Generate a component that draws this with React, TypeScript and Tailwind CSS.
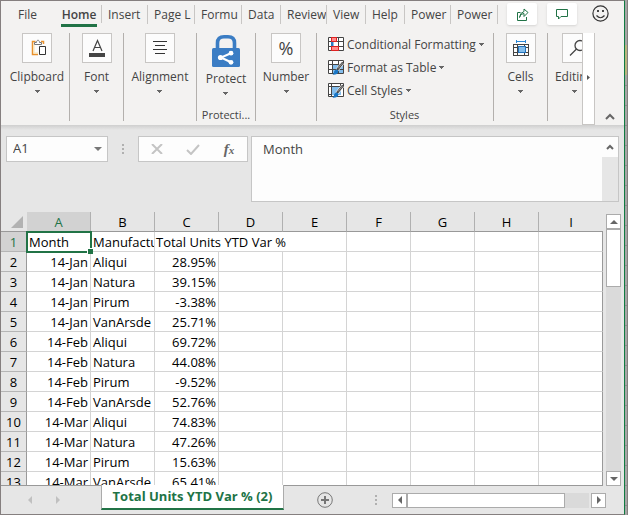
import React from "react";

const rows: [string, string, string][] = [
  ["14-Jan", "Aliqui", "28.95%"],
  ["14-Jan", "Natura", "39.15%"],
  ["14-Jan", "Pirum", "-3.38%"],
  ["14-Jan", "VanArsde", "25.71%"],
  ["14-Feb", "Aliqui", "69.72%"],
  ["14-Feb", "Natura", "44.08%"],
  ["14-Feb", "Pirum", "-9.52%"],
  ["14-Feb", "VanArsde", "52.76%"],
  ["14-Mar", "Aliqui", "74.83%"],
  ["14-Mar", "Natura", "47.26%"],
  ["14-Mar", "Pirum", "15.63%"],
  ["14-Mar", "VanArsde", "65.41%"],
];

const tabs = [
  { label: "Insert", width: "w-[46px]" },
  { label: "Page L", width: "w-[47px]" },
  { label: "Formu", width: "w-[47px]" },
  { label: "Data", width: "w-[39px]" },
  { label: "Review", width: "w-[46px]" },
  { label: "View", width: "w-[39px]" },
  { label: "Help", width: "w-[39px]" },
  { label: "Power", width: "w-[46px]" },
  { label: "Power", width: "w-[47px]" },
];

const columns = ["A", "B", "C", "D", "E", "F", "G", "H", "I"];

function Down({ className = "" }: { className?: string }) {
  return (
    <svg aria-hidden="true" width="5" height="3" viewBox="0 0 5 3" shapeRendering="crispEdges" className={className}>
      <path d="M0 0h5v1H0zM1 1h3v1H1zM2 2h1v1H2z" fill="#666" />
    </svg>
  );
}

function Arrow({ dir, fill = "#666" }: { dir: "up" | "down" | "left" | "right"; fill?: string }) {
  const paths = {
    up: "M0 6L4 2l4 4z",
    down: "M0 2h8L4 6z",
    left: "M6 0v8L2 4z",
    right: "M2 0v8l4-4z",
  };
  return (
    <svg aria-hidden="true" width="8" height="8" viewBox="0 0 8 8">
      <path d={paths[dir]} fill={fill} />
    </svg>
  );
}

function Group({ label, width, children }: { label: string; width: string; children: React.ReactNode }) {
  return (
    <div className={`flex shrink-0 justify-center border-r border-[#b3b0ad] ${width}`}>
      <button className="flex flex-col items-center">
        <span className="flex size-[30px] items-center justify-center border border-[#c8c6c4] bg-[#fcfcfc]">{children}</span>
        <span className="mt-[5px] leading-[18px]">{label}</span>
        <Down className="mt-1" />
      </button>
    </div>
  );
}

function ClipboardIcon() {
  return (
    <svg width="16" height="18" viewBox="0 0 16 18" fill="none" className="ml-[3px]">
      <path d="M4.500 2.500H1.500V15.500H7M10 2.500h2.500V5" stroke="#e8912d" strokeWidth="1.500" />
      <path d="M3 5v9h4" stroke="#fbe3a9" strokeWidth="1" />
      <path d="M3.500 5.500V3.500h2C5.500 .5 8.500 .5 8.500 3.500h2v2z" fill="#fff" stroke="#777" />
      <path d="M8.500 7.500h6v8h-6z" fill="#fff" stroke="#333" />
    </svg>
  );
}

function AlignIcon() {
  return (
    <svg width="16" height="16" viewBox="0 0 16 16" shapeRendering="crispEdges">
      <path d="M1 1h14v1H1zM3 5h10v1H3zM1 9h14v1H1zM3 13h10v1H3z" fill="#333" />
    </svg>
  );
}

function LockIcon() {
  return (
    <svg width="28" height="32" viewBox="0 0 28 32">
      <path d="M5.500 14V8Q5.500 1.800 12 1.800h4Q22.500 1.800 22.500 8v6" fill="none" stroke="#3b7dc4" strokeWidth="3.600" />
      <rect y="13" width="28" height="19" rx="1.500" fill="#3b7dc4" />
      <path d="M19.500 18L9 22.500l10.500 5" fill="none" stroke="#fff" strokeWidth="2" />
      <circle cx="19" cy="18.200" r="2.400" fill="#fff" />
      <circle cx="8.500" cy="22.500" r="2.600" fill="#fff" />
      <circle cx="19" cy="27.300" r="2.400" fill="#fff" />
    </svg>
  );
}

function StyleIcon({ kind }: { kind: "conditional" | "table" | "cell" }) {
  return (
    <svg width="16" height="16" viewBox="0 0 16 16" fill="none">
      <path d="M.5.5h15v13H.5z" fill="#fff" />
      {kind === "table" && <path d="M5 5h10v8H5z" fill="#83bdec" />}
      {kind === "cell" && <path d="M3 3h10v9H3z" fill="#83bdec" />}
      <path
        d={kind === "cell" ? "M.5.5h15v13H.5zM3.500 0v14M0 3.500h16M12.500 0v3M0 11.500h4" : "M.5.5h15v13H.5zM0 4.500h16M0 9.500h16M4.500 0v14M10.500 0v14"}
        stroke="#444"
      />
      {kind === "conditional" && (
        <>
          <path d="M3.500 .5h5v4h-5zM3.500 9.500h7v4h-7z" fill="#ff8b8b" stroke="#e02020" />
          <path d="M3 5h2.500v4H3z" fill="#2b7bc3" />
        </>
      )}
      {kind !== "conditional" && (
        <>
          <path d="M14.800 2.800L9 10" stroke="#fff" strokeWidth="3.500" />
          <path d="M15 2.500L9 10" stroke="#444" strokeWidth="2.200" />
          <path d="M14.500 3L10 8.500" stroke="#bbb" strokeWidth=".7" />
          <path d="M8.500 9.500q2 .5 2 2-.7 3.500-6 3.200 1.700-1.200 1.500-3 .6-2 2.500-2.200z" fill="#1976c5" />
        </>
      )}
    </svg>
  );
}

function CellsIcon() {
  return (
    <svg width="16" height="16" viewBox="0 0 16 16" fill="none" shapeRendering="crispEdges">
      <path d="M3.500 0v3M12.500 0v3M4 1.500h9" stroke="#2b88d8" />
      <path d="M.5 4.500h15v11H.5zM0 7.500h16M0 12.500h16M4.500 4v12M11.500 4v12" stroke="#444" />
      <path d="M5 6h7v6H5z" fill="#83bdec" stroke="#2372ba" />
    </svg>
  );
}

function StyleButton({ kind, label }: { kind: "conditional" | "table" | "cell"; label: string }) {
  return (
    <button className="flex h-[23px] items-center whitespace-nowrap">
      <StyleIcon kind={kind} />
      <span className="ml-[3px] mr-[3px]">{label}</span>
      <Down />
    </button>
  );
}

function Ribbon() {
  return (
    <div className="flex h-[92px] overflow-hidden pl-1 text-[12px] text-[#444]">
      <div className="flex h-[88px]">
        <Group label="Clipboard" width="w-[65px]"><ClipboardIcon /></Group>
        <Group label="Font" width="w-[54px]">
          <svg width="16" height="18" viewBox="0 0 16 18">
            <path d="M4 12L8.500 1.500 13 12M5.500 8.500h6" fill="none" stroke="#444" strokeWidth="1.200" />
            <path d="M0 14h16v4H0z" fill="#444" />
          </svg>
        </Group>
        <Group label="Alignment" width="w-[73px]"><AlignIcon /></Group>
        <div className="flex w-[59px] shrink-0 flex-col items-center border-r border-[#b3b0ad]">
          <button className="flex flex-col items-center pt-[2px]">
            <LockIcon />
            <span className="mt-[3px] leading-[18px]">Protect</span>
            <Down className="mt-1" />
          </button>
          <span className="mt-auto text-[11px] leading-[12px]">Protecti...</span>
        </div>
        <Group label="Number" width="w-[61px]"><span className="text-[18px]">%</span></Group>
        <div className="flex w-[177px] shrink-0 flex-col border-r border-[#b3b0ad] pl-[11px]">
          <StyleButton kind="conditional" label="Conditional Formatting" />
          <StyleButton kind="table" label="Format as Table" />
          <StyleButton kind="cell" label="Cell Styles" />
          <span className="mt-auto pr-[12px] text-center text-[11px] leading-[12px]">Styles</span>
        </div>
        <Group label="Cells" width="w-[54px]"><CellsIcon /></Group>
        <div className="w-[34px] shrink-0 overflow-hidden pl-[8px]">
          <button className="flex w-[36px] flex-col items-center">
            <span className="ml-[6px] flex size-[30px] items-center justify-center border border-[#c8c6c4] bg-[#fcfcfc]">
              <svg width="18" height="18" viewBox="0 0 18 18" fill="none" stroke="#444" strokeWidth="1.300">
                <circle cx="12" cy="6.500" r="5" />
                <path d="M8.500 10L2 16.500" />
              </svg>
            </span>
            <span className="mt-[5px] leading-[18px]">Editing</span>
            <Down className="mt-1" />
          </button>
        </div>
      </div>
      <button aria-label="More commands" className="-mt-1 flex h-24 w-[13px] shrink-0 items-center justify-center border border-[#c8c6c4] bg-white">
        <svg width="3" height="5" viewBox="0 0 3 5"><path d="M0 0v5l3-2.500z" fill="#555" /></svg>
      </button>
      <button aria-label="Collapse ribbon" className="ml-auto mr-[9px] mt-auto mb-[5px]">
        <svg width="10" height="7" viewBox="0 0 10 7"><path d="M1 6l4-4 4 4" fill="none" stroke="#666" strokeWidth="2" /></svg>
      </button>
    </div>
  );
}

function Dots() {
  return (
    <svg aria-hidden="true" width="2" height="10" viewBox="0 0 2 10" shapeRendering="crispEdges">
      <path d="M0 0h2v2H0zM0 4h2v2H0zM0 8h2v2H0z" fill="#b0b0b0" />
    </svg>
  );
}

function FormulaBar() {
  return (
    <div className="flex items-start pl-[5px] pr-[5px] pt-[6px] text-[13px] text-[#444]">
      <div className="flex h-[26px] w-[102px] items-center justify-between border border-[#c6c6c6] bg-[#fdfdfd] pl-1.5 pr-[5px]">
        <input aria-label="Name box" defaultValue="A1" className="w-16 min-w-0 bg-transparent outline-none" />
        <button aria-label="Open name list"><Arrow dir="down" fill="#777" /></button>
      </div>
      <div className="flex h-[26px] w-[30px] items-center justify-center"><Dots /></div>
      <div className="flex h-[26px] w-[110px] items-center border border-[#c6c6c6] bg-[#fdfdfd]">
        <button aria-label="Cancel" className="flex flex-1 justify-center">
          <svg width="12" height="10" viewBox="0 0 12 10"><path d="M1 0l10 10M11 0L1 10" stroke="#c4c4c4" strokeWidth="2" /></svg>
        </button>
        <button aria-label="Enter" className="flex flex-1 justify-center">
          <svg width="14" height="11" viewBox="0 0 14 11"><path d="M1 6l4 4 8-9" fill="none" stroke="#c4c4c4" strokeWidth="2" /></svg>
        </button>
        <button aria-label="Insert function" className="flex flex-1 items-baseline justify-center font-['Liberation_Serif',serif] text-[15px] font-bold italic leading-5 text-[#666]">
          f<span className="text-[11px]">x</span>
        </button>
      </div>
      <div className="ml-[3px] flex h-[66px] flex-1 border border-[#c6c6c6] bg-[#fdfdfd]">
        <textarea aria-label="Formula" defaultValue="Month" className="min-w-0 flex-1 resize-none bg-transparent pl-[11px] pt-[2px] leading-5 outline-none" />
        <div className="flex w-4 flex-col bg-[#e6e6e6]">
          <button aria-label="Collapse formula bar" className="flex h-5 items-center justify-center bg-[#fdfdfd]">
            <svg width="8" height="6" viewBox="0 0 8 6"><path d="M1 5l3-3 3 3" fill="none" stroke="#666" strokeWidth="2" /></svg>
          </button>
        </div>
      </div>
    </div>
  );
}

const cell = "border-b border-r border-[#d4d4d4] p-0 pt-px whitespace-nowrap overflow-hidden";

function Sheet() {
  return (
    <table className="w-full table-fixed border-separate border-spacing-0 bg-white text-[13px] leading-[18px] text-black">
      <colgroup>
        <col className="w-[26px]" />
        {columns.map((c) => <col key={c} />)}
      </colgroup>
      <thead>
        <tr className="h-5 bg-[#e6e6e6]">
          <th aria-label="Select all" className="border-b border-[#999] p-0">
            <svg className="ml-[10px]" width="12" height="12" viewBox="0 0 12 12"><path d="M12 0v12H0z" fill="#b2b2b2" /></svg>
          </th>
          {columns.map((c) => (
            <th
              key={c}
              scope="col"
              className={
                c === "A"
                  ? "border-b border-r border-b-[#217346] border-r-[#b0b0b0] bg-[#d2d2d2] p-0 pt-px font-normal text-[#217346]"
                  : c === "I"
                    ? "border-b border-[#999] p-0 pt-px font-normal"
                    : "border-b border-r border-b-[#999] border-r-[#b0b0b0] p-0 pt-px font-normal"
              }
            >
              {c}
            </th>
          ))}
        </tr>
      </thead>
      <tbody>
        <tr className="h-5">
          <th scope="row" className="border-b border-r border-b-[#b5b5b5] border-r-[#217346] bg-[#d2d2d2] p-0 pt-px font-normal text-[#217346]">1</th>
          <td className="relative border-b border-r border-[#217346] p-0 pl-[2px] pt-px outline-2 -outline-offset-1 outline-[#217346]">
            Month
            <span className="absolute -bottom-[3px] -right-[3px] size-[6px] border-l border-t border-white bg-[#217346]" />
          </td>
          <td className={`${cell} pl-[2px]`}>Manufactu</td>
          <td colSpan={3} className={`${cell} pl-px`}>Total Units YTD Var %</td>
          {["F", "G", "H"].map((c) => <td key={c} className={cell} />)}
          <td className="border-b border-r border-b-[#d4d4d4] border-r-[#999] p-0" />
        </tr>
        {rows.map(([month, maker, value], i) => (
          <tr key={i} className="h-5">
            <th scope="row" className="border-b border-r border-b-[#b5b5b5] border-r-[#999] bg-[#e6e6e6] p-0 pt-px font-normal">{i + 2}</th>
            <td className={`${cell} pr-[2px] text-right`}>{month}</td>
            <td className={`${cell} pl-[2px]`}>{maker}</td>
            <td className={`${cell} pr-[2px] text-right`}>{value}</td>
            {["D", "E", "F", "G", "H"].map((c) => <td key={c} className={cell} />)}
            <td className="border-b border-r border-b-[#d4d4d4] border-r-[#999] p-0" />
          </tr>
        ))}
      </tbody>
    </table>
  );
}

const scrollButton = "flex size-[15px] shrink-0 items-center justify-center border border-[#ababab] bg-white";

export default function App() {
  return (
    <div className="flex h-screen w-full overflow-hidden bg-[#e6e6e6] font-['Open_Sans','Noto_Sans',sans-serif]">
      <main className="flex min-w-0 flex-1 flex-col border border-[#857f7f] border-r-[#107c41]">
        <header className="bg-[#f3f2f1]">
          <nav className="flex h-8 items-start pt-1 text-[12px] leading-[19px] text-[#444]">
            <button className="w-[53px]">File</button>
            <button className="ml-[7px] w-9 border-b-[3px] border-[#217346] font-semibold">Home</button>
            <span className="ml-[4px] h-[18px] w-px bg-[#c8c6c4]" />
            {tabs.map((t, i) => (
              <button key={i} className={`h-[19px] shrink-0 overflow-hidden whitespace-nowrap border-r border-[#c8c6c4] pl-[6px] pr-[2px] text-left leading-[19px] ${t.width}`}>
                {t.label}
              </button>
            ))}
            <button aria-label="Share" className="-mt-[2px] ml-[9px] flex h-[22px] w-[30px] items-center justify-center rounded-[2px] bg-white shadow-sm">
              <svg width="13" height="13" viewBox="0 0 13 13" fill="none" stroke="#217346">
                <path d="M4.500 4.500h-3v8h9V9M3.500 9.500Q4 5.500 8 5.500v3L12 4.500 8 1v2.500Q4 4.500 3.500 9.500z" />
              </svg>
            </button>
            <button aria-label="Comments" className="-mt-[2px] ml-2.5 flex h-[22px] w-[30px] items-center justify-center rounded-[2px] bg-white shadow-sm">
              <svg width="12" height="11" viewBox="0 0 12 11" fill="none" stroke="#217346"><path d="M.5.5h11v7H5l-2.500 2.500V7.500h-2z" /></svg>
            </button>
            <button aria-label="Feedback" className="ml-auto mr-[15px]">
              <svg width="17" height="17" viewBox="0 0 17 17" fill="none" stroke="#333" strokeWidth="1.200">
                <circle cx="8.500" cy="8.500" r="7.600" />
                <path d="M4.500 10.500q4 4.500 8 0" />
                <path d="M6 5v2M11 5v2" strokeWidth="1.800" />
              </svg>
            </button>
          </nav>
          <Ribbon />
        </header>
        <div className="h-[5px] shrink-0 bg-linear-to-b from-[#cfcfcf] to-[#e6e6e6]" />
        <FormulaBar />
        <div className="mt-[10px] flex min-h-0 flex-1">
          <div className="min-w-0 flex-1 overflow-hidden border-b border-[#999]"><Sheet /></div>
          <div className="ml-[3px] mr-[3px] flex w-[15px] flex-col bg-[#dadada]">
            <div className="h-[2px] bg-[#e6e6e6]" />
            <button aria-label="Scroll up" className={scrollButton}><Arrow dir="up" /></button>
            <div className="h-[58px] border border-[#ababab] bg-white" />
            <button aria-label="Scroll down" className={`${scrollButton} mt-auto`}><Arrow dir="down" /></button>
          </div>
        </div>
        <footer className="flex h-7 shrink-0 items-center">
          <button aria-label="Previous sheet" className="ml-[25px]"><Arrow dir="left" fill="#c0c0c0" /></button>
          <button aria-label="Next sheet" className="ml-5"><Arrow dir="right" fill="#c0c0c0" /></button>
          <button className="-mt-px ml-[39px] h-[25px] w-[183px] self-start whitespace-nowrap border-x border-b-2 border-x-[#ababab] border-b-[#217346] bg-white text-[13px] font-bold text-[#217346]">
            Total Units YTD Var % (2)
          </button>
          <button aria-label="New sheet" className="ml-[33px]">
            <svg width="16" height="16" viewBox="0 0 16 16" fill="none" stroke="#777">
              <circle cx="8" cy="8" r="7.300" />
              <path d="M4 8h8M8 4v8" strokeWidth="2" />
            </svg>
          </button>
          <div className="ml-auto"><Dots /></div>
          <div className="ml-[15px] mr-[18px] flex w-[214px] bg-[#dadada]">
            <button aria-label="Scroll left" className={scrollButton}><Arrow dir="left" /></button>
            <div className="w-[158px] border border-[#ababab] bg-white" />
            <div className="ml-auto w-[2px] bg-[#e6e6e6]" />
            <button aria-label="Scroll right" className={scrollButton}><Arrow dir="right" /></button>
          </div>
        </footer>
      </main>
      <div className="flex w-[3px] shrink-0 flex-col border-r border-[#857f7f] bg-[#a6a6a6]">
        <div className="mt-[45px] h-[30px] bg-[#b9b57e]" />
        <div className="mt-[10px] h-px bg-[#8c8c8c]" />
        {Array.from({ length: 21 }, (_, i) => (
          <div key={i} className="mt-[19px] h-px shrink-0 bg-[#8c8c8c]" />
        ))}
      </div>
    </div>
  );
}
